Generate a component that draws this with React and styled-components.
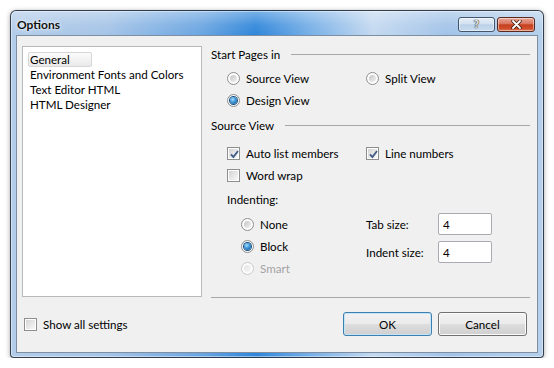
import React from "react"
import styled, { createGlobalStyle, css } from "styled-components"

const GlobalStyle = createGlobalStyle`
  html, body {
    margin: 0;
    padding: 0;
    background: #fff;
  }
  body {
    font-family: Lato, "Noto Sans", sans-serif;
    font-size: 11.6px;
    color: #000;
  }
`

const Window = styled.div`
  box-sizing: border-box;
  width: 534px;
  height: 348px;
  margin: 10px 0 0 10px;
  border: 1px solid rgba(25, 35, 50, 0.85);
  border-radius: 6px 6px 4px 4px;
  padding: 0 5px 4px 5px;
  display: flex;
  flex-direction: column;
  background:
    linear-gradient(180deg, rgba(255, 255, 255, 0.35) 0px, rgba(255, 255, 255, 0.08) 14px, rgba(255, 255, 255, 0) 24px),
    linear-gradient(90deg, #b3cce9 0%, #a5c4e7 18%, #6aa5e1 36%, #2f86da 46%, #75aee6 56%, #c4d9f0 68%, #a2c3e8 82%, #b5d0ec 100%);
  box-shadow: 0 1px 5px rgba(0, 0, 0, 0.35), inset 0 0 0 1px rgba(255, 255, 255, 0.45);
`

const TitleBar = styled.div`
  height: 24px;
  display: flex;
  align-items: flex-start;
  padding-left: 1px;
`

const Title = styled.div`
  margin-top: 6px;
  font-size: 12px;
  font-weight: 700;
  color: #101010;
  text-shadow: 0 0 5px rgba(255, 255, 255, 0.9), 0 0 2px rgba(255, 255, 255, 0.8);
`

const CaptionButtons = styled.div`
  margin: 6px 3px 0 auto;
  display: flex;
  gap: 2px;
`

const CaptionButton = styled.div`
  box-sizing: border-box;
  width: ${({ $close }) => ($close ? 38 : 37)}px;
  height: 15px;
  border-radius: 3px;
  border: 1px solid ${({ $close }) => ($close ? "#5a2a1e" : "#44566e")};
  display: flex;
  align-items: center;
  justify-content: center;
  box-shadow: inset 0 0 0 1px rgba(255, 255, 255, 0.45);
  background: ${({ $close }) =>
    $close
      ? "linear-gradient(180deg, #e9a998 0%, #da7560 45%, #c6401f 52%, #cf4e2b 80%, #df7a58 100%)"
      : "linear-gradient(180deg, #e6eef8 0%, #d3e1f1 45%, #bcd1e8 52%, #c9dcf0 100%)"};
`

const HelpGlyph = styled.span`
  font-family: "DejaVu Sans", sans-serif;
  font-weight: 700;
  font-size: 10px;
  line-height: 10px;
  color: #dcdcdc;
  text-shadow: 0 0 1px #2c2c2c, 0 0 1px #2c2c2c;
`

const Client = styled.div`
  flex: 1;
  border: 1px solid #7f8fa3;
  background: #f0f0f0;
  display: grid;
  grid-template-columns: 180px 1fr;
  grid-template-rows: 252px auto;
  align-content: start;
  column-gap: 9px;
  padding: 10px 6px 0 5px;
`

const ListBox = styled.ul`
  box-sizing: border-box;
  height: 251px;
  margin: 0;
  padding: 5px 0 0 5px;
  list-style: none;
  background: #fff;
  border: 1px solid #bababa;
`

const ListItem = styled.li`
  box-sizing: border-box;
  height: 15px;
  line-height: 15px;
  padding-left: 2px;
  white-space: nowrap;
  ${({ $selected }) =>
    $selected &&
    css`
      width: 64px;
      line-height: 13px;
      padding-left: 1px;
      border: 1px solid #d6d6d6;
      border-radius: 2px;
      background: linear-gradient(180deg, #fcfcfc, #e9e9e9);
    `}
`

const Panel = styled.div`
  display: flex;
  flex-direction: column;
`

const GroupHeader = styled.div`
  height: 18px;
  display: flex;
  align-items: center;
  gap: 11px;
  margin-top: ${({ $top }) => $top || 0}px;
  &::after {
    content: "";
    flex: 1;
    height: 1px;
    background: #a8a8a8;
    margin-right: 1px;
  }
`

const OptionGrid = styled.div`
  display: grid;
  grid-template-columns: 139px auto;
  grid-auto-rows: 22px;
  padding-left: 16px;
  margin-top: ${({ $top }) => $top}px;
`

const Option = styled.label`
  display: flex;
  align-items: center;
  gap: 6px;
  color: ${({ $disabled }) => ($disabled ? "#a3a3a3" : "#000")};
`

const RadioMark = styled.span`
  position: relative;
  flex: none;
  box-sizing: border-box;
  width: 13px;
  height: 13px;
  border-radius: 50%;
  border: 1px solid ${({ $disabled }) => ($disabled ? "#c9c9c9" : "#8d8e8e")};
  background: #fcfcfc;
  &::after {
    content: "";
    position: absolute;
    inset: 2px;
    border-radius: 50%;
    background: ${({ $checked, $disabled }) =>
      $checked
        ? "radial-gradient(circle at 40% 35%, #a8def9 0%, #3b95d8 45%, #0f4b86 100%)"
        : $disabled
        ? "linear-gradient(135deg, #e4e4e4, #f6f6f6)"
        : "linear-gradient(135deg, #c4c4c4, #f2f2f2)"};
    box-shadow: ${({ $checked }) => ($checked ? "0 0 0 1px #1d4f80" : "none")};
  }
`

const CheckMark = styled.span`
  position: relative;
  flex: none;
  box-sizing: border-box;
  width: 13px;
  height: 13px;
  border: 1px solid #8d8e8e;
  background: #fff;
  &::before {
    content: "";
    position: absolute;
    inset: 1px;
    background: linear-gradient(135deg, #d4d4d4, #f8f8f8);
  }
  svg {
    position: absolute;
    left: 0;
    top: 0;
  }
`

const SubLabel = styled.div`
  height: 15px;
  line-height: 15px;
  padding-left: 16px;
  margin-top: 6px;
`

const IndentBlock = styled.div`
  display: flex;
  padding-left: 30px;
  margin-top: 6px;
`

const RadioStack = styled.div`
  width: 125px;
  display: grid;
  grid-auto-rows: 22px;
`

const FieldGrid = styled.div`
  display: grid;
  grid-template-columns: 72px 54px;
  grid-auto-rows: 22px;
  row-gap: 6px;
  align-items: center;
  align-content: start;
`

const TextBox = styled.input`
  box-sizing: border-box;
  width: 54px;
  height: 22px;
  margin: 0;
  padding: 0 0 0 4px;
  border: 1px solid #a9abb1;
  border-radius: 2px;
  background: #fff;
  font: inherit;
  color: #000;
  outline: none;
`

const Separator = styled.div`
  margin-top: auto;
  height: 1px;
  background: #a8a8a8;
  margin-right: 1px;
`

const BottomRow = styled.div`
  grid-column: 1 / -1;
  display: flex;
  align-items: center;
  margin-top: 14px;
  padding-left: 2px;
`

const Buttons = styled.div`
  margin-left: auto;
  margin-right: 4px;
  display: flex;
  gap: 6px;
`

const Button = styled.button`
  box-sizing: border-box;
  width: 89px;
  height: 24px;
  padding: 0;
  border-radius: 3px;
  border: 1px solid ${({ $default }) => ($default ? "#3c7fb1" : "#707070")};
  background: linear-gradient(180deg, #f2f2f2 0%, #ebebeb 48%, #dddddd 52%, #cfcfcf 100%);
  box-shadow: inset 0 0 0 1px ${({ $default }) => ($default ? "#c2e4f6" : "#fbfbfb")};
  font: inherit;
  color: #000;
`

const Radio = ({ label, checked, disabled }) => (
  <Option $disabled={disabled}>
    <RadioMark $checked={checked} $disabled={disabled} />
    {label}
  </Option>
)

const Check = ({ label, checked }) => (
  <Option>
    <CheckMark>
      {checked && (
        <svg width="13" height="13" viewBox="0 0 13 13">
          <path d="M3 6.3 L5.4 9 L10 3" fill="none" stroke="#3f5a86" strokeWidth="1.8" />
        </svg>
      )}
    </CheckMark>
    {label}
  </Option>
)

const pages = ["General", "Environment Fonts and Colors", "Text Editor HTML", "HTML Designer"]

const App = () => (
  <>
    <GlobalStyle />
    <Window>
      <TitleBar>
        <Title>Options</Title>
        <CaptionButtons>
          <CaptionButton>
            <HelpGlyph>?</HelpGlyph>
          </CaptionButton>
          <CaptionButton $close>
            <svg width="11" height="9" viewBox="0 0 11 9">
              <path d="M2 1 L9 8 M9 1 L2 8" stroke="#3a1a12" strokeWidth="3.4" strokeLinecap="round" />
              <path d="M2 1 L9 8 M9 1 L2 8" stroke="#fff" strokeWidth="1.8" strokeLinecap="round" />
            </svg>
          </CaptionButton>
        </CaptionButtons>
      </TitleBar>
      <Client>
        <ListBox>
          {pages.map((page, i) => (
            <ListItem key={page} $selected={i === 0}>
              {page}
            </ListItem>
          ))}
        </ListBox>
        <Panel>
          <GroupHeader $top={-1}>Start Pages in</GroupHeader>
          <OptionGrid $top={4}>
            <Radio label="Source View" />
            <Radio label="Split View" />
            <Radio label="Design View" checked />
          </OptionGrid>
          <GroupHeader $top={5}>Source View</GroupHeader>
          <OptionGrid $top={8}>
            <Check label="Auto list members" checked />
            <Check label="Line numbers" checked />
            <Check label="Word wrap" />
          </OptionGrid>
          <SubLabel>Indenting:</SubLabel>
          <IndentBlock>
            <RadioStack>
              <Radio label="None" />
              <Radio label="Block" checked />
              <Radio label="Smart" disabled />
            </RadioStack>
            <FieldGrid>
              <span>Tab size:</span>
              <TextBox defaultValue="4" />
              <span>Indent size:</span>
              <TextBox defaultValue="4" />
            </FieldGrid>
          </IndentBlock>
          <Separator />
        </Panel>
        <BottomRow>
          <Check label="Show all settings" />
          <Buttons>
            <Button $default>OK</Button>
            <Button>Cancel</Button>
          </Buttons>
        </BottomRow>
      </Client>
    </Window>
  </>
)

export default App
